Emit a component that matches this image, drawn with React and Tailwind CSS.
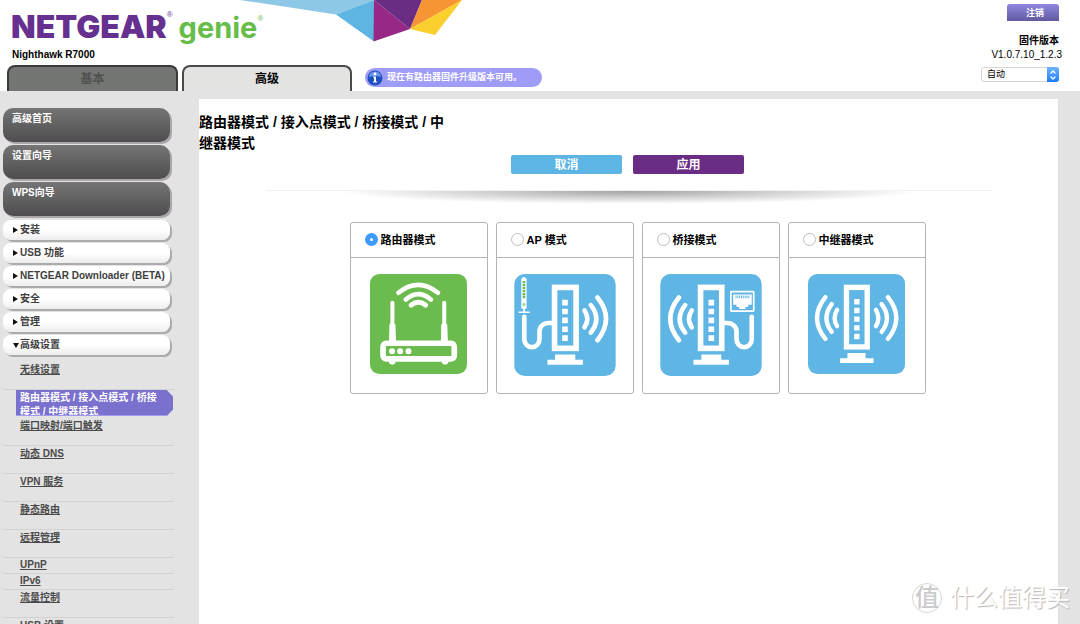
import React, { useState } from 'react';
import { ChevronDown, ChevronUp } from 'lucide-react';

const mainLinks = ['高级首页', '设置向导', 'WPS向导'];

const sections = [
  { label: '安装' },
  { label: 'USB 功能' },
  { label: 'NETGEAR Downloader (BETA)' },
  { label: '安全' },
  { label: '管理' },
  { label: '高级设置', open: true },
];

const subLinks = [
  { label: '无线设置' },
  { label: '路由器模式 / 接入点模式 / 桥接模式 / 中继器模式', active: true },
  { label: '端口映射/端口触发' },
  { label: '动态 DNS' },
  { label: 'VPN 服务' },
  { label: '静态路由' },
  { label: '远程管理' },
  { label: 'UPnP', short: true },
  { label: 'IPv6', short: true },
  { label: '流量控制' },
  { label: 'USB 设置' },
];

function RouterIcon() {
  return (
    <svg viewBox="90 177 290 299" className="w-[97px] h-[100px]" aria-hidden="true">
      <rect x="90" y="177" width="290" height="299" rx="28" fill="#6cbb4f" />
      <g fill="none" stroke="#fff" strokeLinecap="round">
        <path d="M175 233Q234 186 293 233" strokeWidth="14" />
        <path d="M197 253Q234 221 272 253" strokeWidth="14" />
        <path d="M213 270Q234 253 256 270" strokeWidth="15" />
        <path d="M157 263V330M312 263V330" strokeWidth="12" />
        <rect x="129" y="384" width="213" height="47" rx="10" strokeWidth="17" />
      </g>
      <path d="M148 328q9-8 18 0l2 52h-21zM303 328q9-8 18 0l2 52h-21z" fill="#fff" />
      <path d="M147 438h19v6q-9 8-19 0zM305 438h19v6q-9 8-19 0z" fill="#fff" />
      <g fill="#fff">
        <circle cx="156" cy="408" r="9" />
        <circle cx="180" cy="408" r="9" />
        <circle cx="205" cy="408" r="9" />
      </g>
    </svg>
  );
}

function AccessPointIcon() {
  return (
    <svg viewBox="70 175 306 308" className="w-[102px] h-[102px]" aria-hidden="true">
      <rect x="70" y="175" width="306" height="308" rx="32" fill="#5fb5e4" />
      <path d="M91 190q8-12 16 0v90H91zM97 280h5v8h14v5H83v-5h14z" fill="#fff" />
      <path d="M99 196V249" stroke="#6cbb4f" strokeWidth="8" strokeDasharray="7 2" />
      <circle cx="99" cy="267" r="5" fill="#a9d99a" />
      <g fill="none" stroke="#fff">
        <path d="M100 304V372a23 24 0 0 0 46 0V348a26 25 0 0 1 26-25h16" strokeWidth="14" strokeLinecap="round" />
        <rect x="191.500" y="215.500" width="65" height="184" strokeWidth="17" />
        <path d="M223 253V378" strokeWidth="17" strokeDasharray="17 9.800" />
        <g strokeWidth="14" strokeLinecap="round">
          <path d="M282 285q17 25 0 51" />
          <path d="M301 269q33 42 0 83" />
          <path d="M321 246q52 64 0 129" />
        </g>
      </g>
      <path d="M193 418h61v16h23v15H170v-15h23z" fill="#fff" />
    </svg>
  );
}

function BridgeIcon() {
  return (
    <svg viewBox="72 175 306 308" className="w-[102px] h-[102px]" aria-hidden="true">
      <rect x="72" y="175" width="306" height="308" rx="30" fill="#5fb5e4" />
      <g fill="none" stroke="#fff">
        <g strokeWidth="14" strokeLinecap="round">
          <path d="M128 246q-52 64 0 129" />
          <path d="M147 269q-33 42 0 83" />
          <path d="M167 285q-17 25 0 51" />
        </g>
        <rect x="193.500" y="215.500" width="64" height="184" strokeWidth="17" />
        <path d="M226 253V378" strokeWidth="17" strokeDasharray="17 9.800" />
        <path d="M262 323h13a27 25 0 0 1 27 25v24a23 24 0 0 0 46 0V304" strokeWidth="14" strokeLinecap="round" />
        <rect x="285" y="228" width="69" height="59" rx="2" strokeWidth="5" />
      </g>
      <path d="M292 237h56v31h-11v7h-8v6h-19v-6h-8v-7h-10z" fill="#fff" />
      <path d="M299 244h42" stroke="#5fb5e4" strokeWidth="8" strokeDasharray="3 2.500" />
      <path d="M196 418h60v16h23v15H172v-15h24z" fill="#fff" />
    </svg>
  );
}

function RepeaterIcon() {
  return (
    <svg viewBox="86 177 290 299" className="w-[97px] h-[100px]" aria-hidden="true">
      <rect x="86" y="177" width="290" height="299" rx="28" fill="#5fb5e4" />
      <g fill="none" stroke="#fff">
        <g strokeWidth="13" strokeLinecap="round">
          <path d="M138 246q-50 62 0 125" />
          <path d="M157 267q-32 42 0 83" />
          <path d="M173 284q-15 24 0 49" />
          <path d="M325 246q50 62 0 125" />
          <path d="M306 267q32 42 0 83" />
          <path d="M289 284q15 24 0 49" />
        </g>
        <rect x="201" y="217" width="62" height="178" strokeWidth="16" />
        <path d="M232 252V373" strokeWidth="16" strokeDasharray="16 10" />
      </g>
      <path d="M204 413h54v16h24v14H182v-14h22z" fill="#fff" />
    </svg>
  );
}

const modes = [
  { id: 'router', label: '路由器模式', Icon: RouterIcon },
  { id: 'ap', label: 'AP 模式', Icon: AccessPointIcon },
  { id: 'bridge', label: '桥接模式', Icon: BridgeIcon },
  { id: 'repeater', label: '中继器模式', Icon: RepeaterIcon },
];

function Banner() {
  return (
    <svg viewBox="0 0 222 42" className="absolute left-[240px] top-0 w-[222px] h-[42px]" aria-hidden="true">
      <path d="M0 0H134L96 14.500z" fill="#8fc7e6" />
      <path d="M96 14.500L134 0V41.500z" fill="#5fb5e2" />
      <path d="M134 0L170 29L133.500 41.500z" fill="#972886" />
      <path d="M134 0H182L170 29z" fill="#6b2d83" />
      <path d="M182 0H222L170 29z" fill="#f79433" />
      <path d="M222 0L195 35L170 29z" fill="#fbcf2e" />
    </svg>
  );
}

function Header() {
  return (
    <header className="relative flex justify-between bg-white h-[91px] pl-[7px] pr-[21px]">
      <Banner />
      <div className="flex flex-col">
        <div className="flex items-baseline h-[47px] pl-1 pt-[9px] leading-[36px]">
          <span className="font-['Inter',sans-serif] font-black text-[32px] text-[#663090]">NETGEAR</span>
          <sup className="self-start pt-1 text-[8px] leading-[12px] text-[#663090]">®</sup>
          <span className="pl-1.5 font-['Inter',sans-serif] font-bold text-[29px] text-[#67bd4a]">genie</span>
          <sup className="self-start pt-2 text-[8px] leading-[12px] text-[#67bd4a]">®</sup>
        </div>
        <p className="pl-[5px] h-[18px] font-bold text-[10px] leading-[16px]">Nighthawk R7000</p>
        <div className="flex items-start">
          <nav className="flex gap-1">
            <button className="w-[171px] h-[26px] rounded-t-lg border-2 border-b-0 border-[#3a3a3a] bg-[#737572] font-bold text-xs text-[#505050]">
              基本
            </button>
            <button className="w-[170px] h-[26px] rounded-t-lg border-2 border-b-0 border-[#4a4a4a] bg-[#e3e4e2] font-bold text-xs">
              高级
            </button>
          </nav>
          <a href="#firmware" className="ml-[13px] mt-[3px] flex items-center gap-1 w-[177px] h-[19px] rounded-full bg-[#9f9cf8] pl-0.5 font-bold text-[9px] text-white whitespace-nowrap">
            <svg viewBox="0 0 16 16" className="w-4 h-4 shrink-0" aria-hidden="true">
              <circle cx="8" cy="8" r="7.500" fill="#1e4fc0" />
              <path d="M2 7a6 5.500 0 0 1 12 0q-6-2-12 0z" fill="#6d95e6" />
              <circle cx="8" cy="4" r="1.400" fill="#fff" />
              <path d="M6 6.500h3v5h1.200v1H6v-1h1v-4H6z" fill="#fff" />
            </svg>
            现在有路由器固件升级版本可用。
          </a>
        </div>
      </div>

      <div className="flex flex-col items-end pt-1">
        <button className="w-[52px] h-[17px] rounded-t-[3px] bg-gradient-to-b from-[#9088e2] to-[#625a9e] font-bold text-[9px] leading-[16px] text-white pl-1">
          注销
        </button>
        <label htmlFor="language" className="mt-[13px] font-bold text-[10px] leading-[14px]">固件版本</label>
        <p className="-mr-[3px] text-[10px] leading-[13px]">V1.0.7.10_1.2.3</p>
        <div className="relative mt-[6px]">
          <select id="language" className="block appearance-none w-[78px] h-[15px] rounded-[3px] border border-[#d4d4d4] bg-white pl-[5px] text-[9px] leading-[13px]">
            <option>自动</option>
          </select>
          <span className="pointer-events-none absolute right-0 top-0 flex flex-col items-center justify-center w-3 h-[15px] rounded-r-[3px] bg-gradient-to-b from-[#6cb3fa] to-[#1a7df8] text-white">
            <ChevronUp size={8} strokeWidth={4} className="-mb-px" />
            <ChevronDown size={8} strokeWidth={4} className="-mt-px" />
          </span>
        </div>
      </div>
    </header>
  );
}

function Sidebar() {
  return (
    <aside className="w-[199px] shrink-0 pl-[3px] pt-[17px] font-bold text-[10px]">
      <nav className="w-[171px]">
        <ul className="flex flex-col gap-[3px] w-[167px]">
          {mainLinks.map((label) => (
            <li key={label}>
              <a
                href="#menu"
                className="block h-[34px] rounded-[10px] bg-gradient-to-b from-[#757575] to-[#4f4d4f] pl-[9px] pt-1 leading-[14px] text-white shadow-[2px_2px_0_#aaa6aa]"
              >
                {label}
              </a>
            </li>
          ))}
        </ul>

        <ul className="mt-1 flex flex-col gap-[3px] w-[167px]">
          {sections.map(({ label, open }) => (
            <li key={label}>
              <button className="flex items-center gap-px w-full h-[20px] rounded-lg bg-gradient-to-b from-white from-50% to-[#ededed] pb-px pl-[10px] text-left whitespace-nowrap text-[#3e3e3e] shadow-[2px_2px_0_#ababab]">
                <svg viewBox="0 0 6 6" className="w-[6px] h-[6px] shrink-0" aria-hidden="true">
                  <path d={open ? 'M0 1h6L3 6z' : 'M0 0L5 3L0 6z'} fill="#111" />
                </svg>
                {label}
              </button>
            </li>
          ))}
        </ul>

        <ul className="mt-[7px] text-[#4a4a4a] leading-[15px]">
          {subLinks.map(({ label, active, short }) => {
            if (active) {
              return (
                <li key={label} className="h-[28px] pl-[13px]">
                  <a
                    href="#mode"
                    className="block w-[157px] h-[26px] overflow-hidden bg-[#7a70cd] border-b border-[#a09af0] pl-1 pr-2 pt-px leading-[14px] text-white [clip-path:polygon(0_0,96%_0,100%_25%,100%_75%,96%_100%,0_100%)]"
                  >
                    {label}
                  </a>
                </li>
              );
            }
            return (
              <li
                key={label}
                className={`border-b border-[#d2d2d2] pl-[17px] ${short ? 'h-[16px] leading-[13px]' : 'h-[28px]'}`}
              >
                <a href="#setting" className="block underline">{label}</a>
              </li>
            );
          })}
        </ul>
      </nav>
    </aside>
  );
}

function ModeCard({ mode, checked, onSelect }) {
  const { id, label, Icon } = mode;
  return (
    <div className="w-[138px] h-[172px] rounded-[3px] border border-[#b3b3b3]">
      <div className="flex items-center gap-[3px] h-[35px] border-b border-[#b3b3b3] pb-px pl-[14px]">
        <input
          type="radio"
          id={id}
          name="mode"
          checked={checked}
          onChange={onSelect}
          className="appearance-none w-[13px] h-[13px] rounded-full border border-[#bdbdbd] bg-white checked:border-[5px] checked:border-[#3d9afc]"
        />
        <label htmlFor={id} className="font-bold text-[11px] leading-[16px]">{label}</label>
      </div>
      <div className="flex justify-center pt-4">
        <Icon />
      </div>
    </div>
  );
}

function Watermark() {
  return (
    <div className="absolute right-[10px] bottom-[10px] flex items-center gap-2 whitespace-nowrap pointer-events-none">
      <span className="flex items-center justify-center w-[30px] h-[30px] rounded-full border border-[#d6d6d6] text-[24px] leading-[28px] font-medium text-[#cccccc]">
        值
      </span>
      <span className="text-[24px] leading-[32px] font-normal text-white [text-shadow:1px_1px_1px_#b4b4b4]">什么值得买</span>
    </div>
  );
}

export default function App() {
  const [selected, setSelected] = useState('router');

  return (
    <div className="relative flex flex-col h-screen overflow-hidden bg-[#e3e3e3] text-black font-['Liberation_Sans','Noto_Sans_CJK_SC',sans-serif]">
      <Header />
      <div className="flex flex-1 min-h-0">
        <Sidebar />
        <main className="flex-1 mt-2 mr-[22px] pt-[13px] bg-white">
          <h1 className="max-w-[258px] font-bold text-[14px] leading-[21px]">
            路由器模式 / 接入点模式 / 桥接模式 / 中继器模式
          </h1>
          <div className="mt-px flex justify-center gap-[11px] pr-0.5">
            <button className="w-[111px] h-[19px] rounded-[2px] bg-[#5cb5e3] font-bold text-xs leading-[21px] text-white">取消</button>
            <button className="w-[111px] h-[19px] rounded-[2px] bg-[#6a2c84] font-bold text-xs leading-[21px] text-white">应用</button>
          </div>
          <div className="mx-auto mt-4 w-[726px] h-[14px] border-t border-[#f2f2f2] bg-[radial-gradient(ellipse_40%_100%_at_50%_0,#a2a2a2,#ffffff)]" />
          <div className="mt-[18px] flex justify-center gap-2 pl-[18px]">
            {modes.map((mode) => (
              <ModeCard
                key={mode.id}
                mode={mode}
                checked={selected === mode.id}
                onSelect={() => setSelected(mode.id)}
              />
            ))}
          </div>
        </main>
      </div>
      <Watermark />
    </div>
  );
}
